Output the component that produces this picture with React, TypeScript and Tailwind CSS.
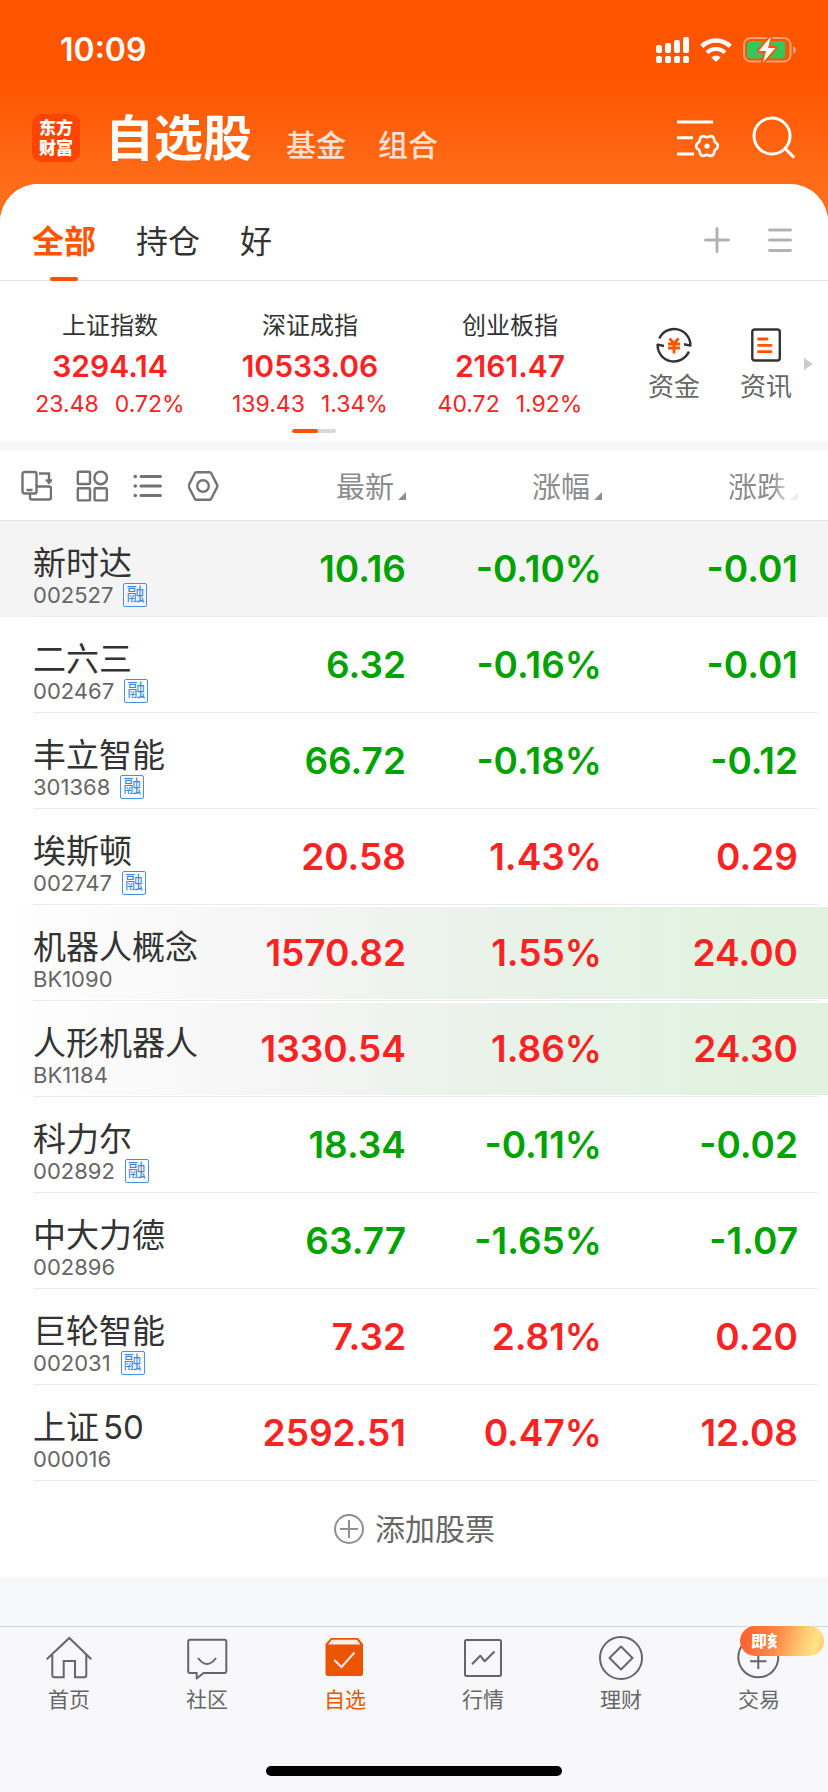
import React from "react";

type Stock = {
  name: string;
  suffix?: string;
  code: string;
  margin?: boolean;
  price: string;
  percent: string;
  change: string;
  up?: boolean;
  row?: string;
};

const sectorRow =
  "bg-[linear-gradient(90deg,#ffffff_0%,#fafafa_15%,#f5f5f5_35%,#ebf2eb_55%,#e5f2e4_75%,#e1f3df_92%)] bg-[length:100%_92px] bg-[position:0_2px] bg-no-repeat";

const stocks: Stock[] = [
  { name: "新时达", code: "002527", margin: true, price: "10.16", percent: "-0.10%", change: "-0.01", row: "bg-[#f4f4f4]" },
  { name: "二六三", code: "002467", margin: true, price: "6.32", percent: "-0.16%", change: "-0.01" },
  { name: "丰立智能", code: "301368", margin: true, price: "66.72", percent: "-0.18%", change: "-0.12" },
  { name: "埃斯顿", code: "002747", margin: true, price: "20.58", percent: "1.43%", change: "0.29", up: true },
  { name: "机器人概念", code: "BK1090", price: "1570.82", percent: "1.55%", change: "24.00", up: true, row: sectorRow },
  { name: "人形机器人", code: "BK1184", price: "1330.54", percent: "1.86%", change: "24.30", up: true, row: sectorRow },
  { name: "科力尔", code: "002892", margin: true, price: "18.34", percent: "-0.11%", change: "-0.02" },
  { name: "中大力德", code: "002896", price: "63.77", percent: "-1.65%", change: "-1.07" },
  { name: "巨轮智能", code: "002031", margin: true, price: "7.32", percent: "2.81%", change: "0.20", up: true },
  { name: "上证", suffix: "50", code: "000016", price: "2592.51", percent: "0.47%", change: "12.08", up: true },
];

const indexes = [
  { name: "上证指数", value: "3294.14", change: "23.48", percent: "0.72%" },
  { name: "深证成指", value: "10533.06", change: "139.43", percent: "1.34%" },
  { name: "创业板指", value: "2161.47", change: "40.72", percent: "1.92%" },
];

const StatusBar = () => (
  <div className="flex h-[100px] items-center justify-between pl-[60px] pr-8 text-white">
    <div className="text-[32px] leading-10 font-semibold">10:09</div>
    <div className="flex items-center gap-[10px]">
      <svg width="34" height="26" viewBox="0 0 34 26" fill="currentColor">
        <rect x="0" y="8" width="6" height="8" rx="2" />
        <rect x="9" y="6" width="6" height="10" rx="2" />
        <rect x="18" y="3" width="6" height="13" rx="2" />
        <rect x="27" y="0" width="6" height="16" rx="2" />
        <rect x="0" y="19" width="6" height="7" rx="2" />
        <rect x="9" y="19" width="6" height="7" rx="2" />
        <rect x="18" y="19" width="6" height="7" rx="2" />
        <rect x="27" y="19" width="6" height="7" rx="2" />
      </svg>
      <svg width="32" height="24" viewBox="0 0 32 24" fill="none" stroke="currentColor">
        <path d="M1.700 8.400A20.400 20.400 0 0 1 30.300 8.400" strokeWidth="4.600" />
        <path d="M7 14.700A12.700 12.700 0 0 1 25 14.700" strokeWidth="4" />
        <path d="M16 24 11.400 19.400A6.600 6.600 0 0 1 20.600 19.400Z" fill="currentColor" stroke="none" />
      </svg>
      <svg width="54" height="28" viewBox="0 0 54 28" fill="none">
        <rect x="2" y="2" width="46.500" height="23.500" rx="6.500" stroke="#fff" strokeOpacity="0.45" strokeWidth="2" />
        <path d="M51 10.500c4 1.200 4 6 0 7.200Z" fill="#fff" fillOpacity="0.5" />
        <rect x="5" y="5" width="38.300" height="17.500" rx="3.500" fill="#34c759" />
        <path
          d="M29 .5 16.700 15H24L21 26.500 33.400 12H26Z"
          fill="#fff"
          stroke="#ff5700"
          strokeWidth="4"
          strokeLinejoin="round"
          paintOrder="stroke"
        />
      </svg>
    </div>
  </div>
);

const Header = () => (
  <header className="flex h-[84px] items-start justify-between pl-8 pr-[31px] text-white">
    <div className="flex items-start">
      <div className="mt-[14px] flex h-12 w-12 flex-col items-center justify-center rounded-[10px] bg-[#ff4400] text-[17px] leading-5 font-black">
        <span>东方</span>
        <span>财富</span>
      </div>
      <nav className="mt-[3px] ml-[25px] flex items-baseline leading-[72px]">
        <a href="#stocks" className="text-[49px] font-bold">
          自选股
        </a>
        <a href="#funds" className="ml-[34px] text-[30px] font-medium text-white/80">
          基金
        </a>
        <a href="#groups" className="ml-8 text-[30px] font-medium text-white/80">
          组合
        </a>
      </nav>
    </div>
    <div className="mt-4 flex gap-8">
      <button type="button" aria-label="设置">
        <svg width="44" height="44" viewBox="0 0 44 44" fill="none" stroke="currentColor" strokeWidth="3">
          <path d="M2 6H38M2 21.700H18M2 38H19" />
          <path
            transform="translate(32 30)"
            strokeWidth="2.600"
            d="M9.700-2.600Q12 0 9.700 2.600Q6.900 4 7.100 7.100Q6 10.400 2.600 9.700Q0 8-2.600 9.700Q-6 10.400-7.100 7.100Q-6.900 4-9.700 2.600Q-12 0-9.700-2.600Q-6.900-4-7.100-7.100Q-6-10.400-2.600-9.700Q0-8 2.600-9.700Q6-10.400 7.100-7.100Q6.900-4 9.700-2.600Z"
          />
          <circle cx="32" cy="30" r="2.600" fill="currentColor" stroke="none" />
        </svg>
      </button>
      <button type="button" aria-label="搜索">
        <svg width="46" height="44" viewBox="0 0 46 44" fill="none" stroke="currentColor" strokeWidth="3">
          <circle cx="21" cy="20" r="18" />
          <path d="M34 32.400 43.200 41.600" />
        </svg>
      </button>
    </div>
  </header>
);

const Tabs = () => (
  <nav className="flex h-[97px] items-start justify-between px-8 pt-[34px] shadow-[inset_0_-1px_0_#e2e2e2]">
    <div className="flex gap-10 text-[32px] leading-[48px] text-[#333]">
      <button type="button" className="flex flex-col items-center font-bold text-[#ff5500]">
        全部
        <span className="mt-[11px] h-1 w-7 rounded-xs bg-[#f55200]" />
      </button>
      <button type="button" className="self-start">
        持仓
      </button>
      <button type="button" className="self-start">
        好
      </button>
    </div>
    <div className="mt-[6px] flex gap-8">
      <button type="button" aria-label="添加分组">
        <svg width="32" height="32" viewBox="0 0 32 32" stroke="#b2b2b2" strokeWidth="3" strokeLinecap="round">
          <path d="M17 4.500V27.500M5.500 16H28.500" />
        </svg>
      </button>
      <button type="button" aria-label="分组列表">
        <svg width="32" height="32" viewBox="0 0 32 32" stroke="#b2b2b2" strokeWidth="3" strokeLinecap="round">
          <path d="M5.500 6H26.500M5.500 16H26.500M5.500 26.500H26.500" />
        </svg>
      </button>
    </div>
  </nav>
);

const Indexes = () => (
  <section className="flex items-center">
    <div className="flex flex-1 flex-col items-center pt-[29px] pb-2">
      <div className="flex w-full pl-[10px] pr-[18px] text-center">
        {indexes.map((item) => (
          <div key={item.name} className="flex-1">
            <div className="text-[24px] leading-8 text-[#333]">{item.name}</div>
            <div className="mt-1 text-[30px] leading-10 font-semibold text-[#fa2323]">{item.value}</div>
            <div className="mt-1 flex justify-center gap-4 text-[23px] leading-7 text-[#fa2323]">
              <span>{item.change}</span>
              <span>{item.percent}</span>
            </div>
          </div>
        ))}
      </div>
      <div className="mt-[11px] h-1 w-11 overflow-hidden rounded-xs bg-[#d6d8de]">
        <div className="h-1 w-[26px] rounded-xs bg-[#f55200]" />
      </div>
    </div>
    <div className="flex items-center pt-[6px] pl-5 pr-[15px] text-[26px] leading-8 text-[#666]">
      <button type="button" className="mr-10 flex flex-col items-center gap-[6px]">
        <svg width="40" height="40" viewBox="0 0 40 40" fill="none" stroke="#333" strokeWidth="2.400" strokeLinejoin="round">
          <path d="M5.300 13.500A16.300 16.300 0 0 1 36.400 20.600L30 19.300" />
          <path d="M34.900 26.500A16.300 16.300 0 0 1 3.600 19.600L10 21" />
          <path d="M15.500 13.500 20 18.500 24.500 13.500M14 19H26M14 23H26M20 18.500V28.500" stroke="#ff5500" strokeWidth="2.800" />
        </svg>
        资金
      </button>
      <button type="button" className="flex flex-col items-center gap-[6px]">
        <svg width="40" height="40" viewBox="0 0 40 40" fill="none" stroke="#333" strokeWidth="2.400" strokeLinecap="round">
          <rect x="6.300" y="4.500" width="27.500" height="31" rx="2.500" />
          <path d="M12.500 14H21M12.500 20.300H25M12.500 26.700H25" stroke="#ff5500" strokeWidth="2.800" />
        </svg>
        资讯
      </button>
      <svg className="ml-3" width="9" height="12" viewBox="0 0 9 12" fill="#ccc">
        <path d="M0 0 9 6 0 12Z" />
      </svg>
    </div>
  </section>
);

const SortButton = ({ label, faded }: { label: string; faded?: boolean }) => (
  <button
    type="button"
    className={
      faded
        ? "inline-flex items-end gap-1 pt-[3px] [mask-image:linear-gradient(90deg,#000_62%,rgba(0,0,0,0.15)_92%)]"
        : "inline-flex items-end gap-1 pt-[3px]"
    }
  >
    {label}
    <svg className="mb-2" width="8" height="8" viewBox="0 0 8 8" fill="#8e8e93">
      <path d="M8 0V8H0Z" />
    </svg>
  </button>
);

const Toolbar = () => (
  <div className="flex gap-6 pl-5">
    <button type="button" aria-label="横屏">
      <svg width="32" height="32" viewBox="0 0 32 32" fill="none" stroke="#737373" strokeWidth="2.400">
        <rect x="2.500" y="2" width="14" height="21.500" rx="2" />
        <path d="M6.500 20H12.500M19 3.500H29V12M26 9.500 29 12.800 32 9.500M17 16.500H29Q31 16.500 31 18.500V27.500Q31 29.500 29 29.500H12Q10 29.500 10 27.500V24" />
      </svg>
    </button>
    <button type="button" aria-label="宫格">
      <svg width="32" height="32" viewBox="0 0 32 32" fill="none" stroke="#737373" strokeWidth="2.400">
        <rect x="1.800" y="1.800" width="12.200" height="12.200" rx="1" />
        <circle cx="24.700" cy="7.900" r="6.300" />
        <rect x="1.800" y="18.200" width="12.200" height="12.200" rx="1" />
        <rect x="18.600" y="18.200" width="12.200" height="12.200" rx="1" />
      </svg>
    </button>
    <button type="button" aria-label="列表">
      <svg width="32" height="32" viewBox="0 0 32 32" stroke="#737373" strokeWidth="3" strokeLinecap="round">
        <path d="M9 6.500H28.500M9 16H28.500M9 25.500H28.500" />
        <path d="M3.200 6.500H3.300M3.200 16H3.300M3.200 25.500H3.300" strokeWidth="3.600" />
      </svg>
    </button>
    <button type="button" aria-label="表头设置">
      <svg width="32" height="32" viewBox="0 0 32 32" fill="none" stroke="#737373" strokeWidth="2.400" strokeLinejoin="round">
        <path d="M8.500 2.200H21.500Q22.600 2.200 23.200 3.200L29 14.600Q29.700 16 29 17.400L23.200 28.800Q22.600 29.800 21.500 29.800H8.500Q7.400 29.800 6.800 28.800L1 17.400Q.3 16 1 14.600L6.800 3.200Q7.400 2.200 8.500 2.200Z" />
        <circle cx="15" cy="16" r="5.800" />
      </svg>
    </button>
  </div>
);

const cell = "flex h-24 items-center justify-end border-b border-[#ebebeb]";

const StockRow = ({ stock }: { stock: Stock }) => (
  <tr className={stock.row}>
    <td className="p-0">
      <div className="ml-[33px] flex h-24 flex-col border-b border-[#ebebeb] pt-[22px] whitespace-nowrap">
        <div className="text-[33px] leading-10 text-[#333]">
          {stock.name}
          {stock.suffix && <span className="ml-1">{stock.suffix}</span>}
        </div>
        <div className="flex h-6 items-center gap-[10px] text-[22px] leading-6 text-[#666]">
          {stock.code}
          {stock.margin && (
            <span className="flex h-6 w-6 items-center justify-center rounded-xs border border-[#4a90e2] text-[18px] leading-5 text-[#3d86dc]">
              融
            </span>
          )}
        </div>
      </div>
    </td>
    {[stock.price, stock.percent].map((value) => (
      <td key={value} className={stock.up ? "p-0 text-[#fa2323]" : "p-0 text-[#00a200]"}>
        <div className={cell}>{value}</div>
      </td>
    ))}
    <td className={stock.up ? "p-0 text-[#fa2323]" : "p-0 text-[#00a200]"}>
      <div className={cell + " mr-[10px] pr-5"}>{stock.change}</div>
    </td>
  </tr>
);

const NavItem = ({
  label,
  active,
  children,
}: {
  label: string;
  active?: boolean;
  children: React.ReactNode;
}) => (
  <a
    href="#nav"
    className={
      active
        ? "relative flex flex-1 flex-col items-center pt-[6px] text-[#eb5500]"
        : "relative flex flex-1 flex-col items-center pt-[6px] text-[#666]"
    }
  >
    {children}
    <span className="mt-[5px]">{label}</span>
  </a>
);

const BottomNav = () => (
  <footer className="border-t border-[#d4d8dc] bg-[#f8f8fb]">
    <nav className="flex text-[21px] leading-7">
      <NavItem label="首页">
        <svg width="48" height="48" viewBox="0 0 48 48" fill="none" stroke="currentColor" strokeWidth="2">
          <path d="M1.700 26.300 24.300 5 46.300 26.300" />
          <path d="M7.300 22V42Q7.300 44.200 9.300 44.200H18.700V28H30V44.200H39.300Q41.300 44.200 41.300 42V22" />
        </svg>
      </NavItem>
      <NavItem label="社区">
        <svg width="48" height="48" viewBox="0 0 48 48" fill="none" stroke="currentColor" strokeWidth="2" strokeLinejoin="round">
          <path d="M7 6.700H41.500Q43.300 6.700 43.300 8.500V38Q43.300 40 41.500 40H20.500L13.700 45.500V40H7Q5.200 40 5.200 38V8.500Q5.200 6.700 7 6.700Z" />
          <path d="M15 25Q24 37 33 25" />
        </svg>
      </NavItem>
      <NavItem label="自选" active>
        <svg width="48" height="48" viewBox="0 0 48 48" fill="none">
          <path d="M10 5H37L42 11V40.500Q42 43 39.500 43H7Q4.500 43 4.500 40.500V11Z" fill="currentColor" />
          <path d="M10.700 6.700H35.800L39.500 11.500H7.200Z" fill="#fdeee5" />
          <path d="M13.300 27 20.500 34 33.500 19.500" stroke="#fdeee5" strokeWidth="2" />
        </svg>
      </NavItem>
      <NavItem label="行情">
        <svg width="48" height="48" viewBox="0 0 48 48" fill="none" stroke="currentColor" strokeWidth="2" strokeLinejoin="round">
          <rect x="6" y="7" width="36" height="36" rx="1.500" />
          <path d="M13 31.300 21.300 22.700 25.700 28.300 35.500 18.500" />
        </svg>
      </NavItem>
      <NavItem label="理财">
        <svg width="48" height="48" viewBox="0 0 48 48" fill="none" stroke="currentColor" strokeWidth="2" strokeLinejoin="round">
          <circle cx="24" cy="25" r="21" />
          <path d="M24 13.500 35.500 25 24 36.500 12.500 25Z" />
        </svg>
      </NavItem>
      <NavItem label="交易">
        <svg width="48" height="48" viewBox="0 0 48 48" fill="none" stroke="currentColor" strokeWidth="2">
          <circle cx="23.300" cy="24.300" r="20" />
          <path d="M15 28.300H31.500M23.300 20V36" />
        </svg>
        <span className="absolute -top-px right-1 flex h-[30px] w-[84px] items-center rounded-full bg-[linear-gradient(105deg,#ff6434_10%,#ff8c4a_45%,#ffcf78_75%,#ffe184_88%,#ffc76a_100%)] pl-[11px] text-white">
          <span className="text-[16px] leading-5 font-black whitespace-nowrap [mask-image:linear-gradient(90deg,#000_26px,transparent_26px)]">
            即刻
          </span>
        </span>
      </NavItem>
    </nav>
    <div className="mx-auto mt-[52px] mb-4 h-[10px] w-[296px] rounded-full bg-black" />
  </footer>
);

const App = () => {
  return (
    <div className="flex min-h-screen flex-col bg-[linear-gradient(#ff5500_80px,#ff6e1a_190px)] font-['Inter','Noto_Sans_CJK_SC',sans-serif]">
      <StatusBar />
      <Header />
      <main className="flex flex-1 flex-col overflow-hidden rounded-t-[38px] bg-[#f6f8fa]">
        <div className="bg-white">
          <Tabs />
          <Indexes />
        </div>
        <div className="mt-[10px] bg-white">
          <table className="w-full table-fixed border-collapse">
            <thead>
              <tr className="h-[70px] text-right text-[29px] leading-10 text-[#8c8c8c] shadow-[inset_0_-1px_0_#e6e6e6]">
                <th className="p-0 font-normal">
                  <Toolbar />
                </th>
                <th className="w-[196px] p-0 align-middle font-normal">
                  <SortButton label="最新" />
                </th>
                <th className="w-[196px] p-0 align-middle font-normal">
                  <SortButton label="涨幅" />
                </th>
                <th className="w-[226px] p-0 pr-[30px] align-middle font-normal">
                  <SortButton label="涨跌" faded />
                </th>
              </tr>
            </thead>
            <tbody className="text-[37px] leading-[48px] font-normal [&_td+td]:font-semibold">
              {stocks.map((stock) => (
                <StockRow key={stock.code} stock={stock} />
              ))}
            </tbody>
          </table>
          <button
            type="button"
            className="flex h-24 w-full items-center justify-center gap-[10px] text-[30px] leading-10 text-[#666]"
          >
            <svg width="32" height="32" viewBox="0 0 32 32" fill="none" stroke="#8e8e93" strokeWidth="2">
              <circle cx="16" cy="16" r="14" />
              <path d="M16 7V25M7 16H25" />
            </svg>
            添加股票
          </button>
        </div>
        <div className="min-h-[49px] flex-1" />
      </main>
      <BottomNav />
    </div>
  );
};

export default App;
